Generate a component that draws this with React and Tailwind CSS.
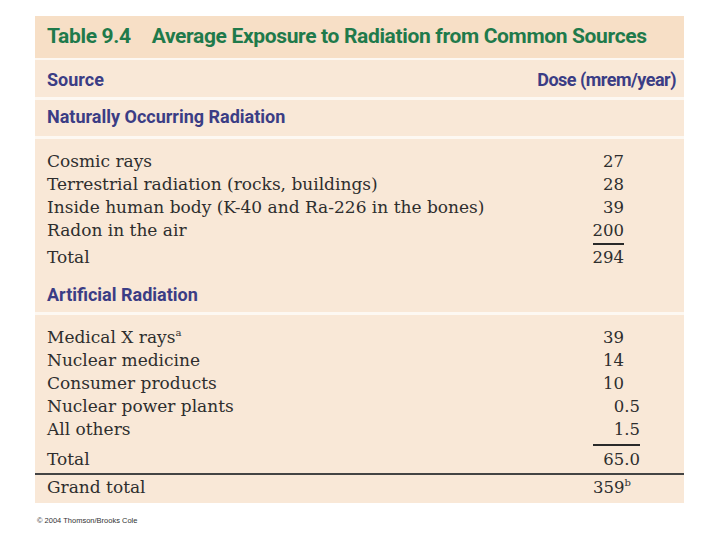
import React from "react";

const narrow = "font-['Roboto',sans-serif]";
const serif = "font-['DejaVu_Serif','Liberation_Serif',serif]";

function Row({ label, value, dec, sup }) {
  return (
    <div className="flex h-[23px] items-start justify-between leading-[23px]">
      <span className="text-[17px]">
        {label}
        {sup && <sup className="text-[10px] -top-[7px]">{sup}</sup>}
      </span>
      <span className={"text-[16.5px] " + (dec ? "pr-[44px]" : "pr-[60px]")}>{value}</span>
    </div>
  );
}

function Rule({ w, cls }) {
  return (
    <div className={"flex justify-end pr-[44px] " + cls}>
      <div className={"h-[2px] bg-[#2a2a2a] " + w} />
    </div>
  );
}

export default function App() {
  return (
    <div className="w-[720px] h-[540px] bg-white pt-[16px] pl-[35px] relative">
      <div className="w-[649px] flex flex-col gap-[2px] bg-[#fdf8f2]">
        {/* title */}
        <div className={"h-[42px] bg-[#f7dfc6] pl-[12px] pt-[8px] text-[21px] leading-[24px] font-bold whitespace-nowrap tracking-[-0.35px] text-[#1f7a4b] " + narrow}>
          <span>Table 9.4</span>
          <span className="ml-[21px]">Average Exposure to Radiation from Common Sources</span>
        </div>
        {/* header */}
        <div className={"h-[37px] bg-[#f9e8d7] flex justify-between pl-[12px] pr-[8px] pt-[10px] text-[18px] leading-[20px] font-bold text-[#3b3d85] mb-[1px] " + narrow}>
          <span>Source</span>
          <span className="tracking-[-0.5px]">Dose (mrem/year)</span>
        </div>
        <div className={"h-[36px] bg-[#f9e8d7] pl-[12px] pt-[7px] text-[18px] leading-[20px] font-bold text-[#3b3d85] mb-[1px] " + narrow}>
          Naturally Occurring Radiation
        </div>
        {/* body 1 */}
        <div className={"h-[173px] bg-[#f9e8d7] pl-[12px] pt-[11px] text-[#2e2e2e] mb-[1px] " + serif}>
          <Row label="Cosmic rays" value="27" />
          <Row label="Terrestrial radiation (rocks, buildings)" value="28" />
          <Row label="Inside human body (K-40 and Ra-226 in the bones)" value="39" />
          <Row label="Radon in the air" value="200" />
          <Rule w="w-[31px] mr-[16px]" cls="mt-[1px] mb-[1px]" />
          <Row label="Total" value="294" />
          <div className={"mt-[16px] text-[18px] leading-[20px] font-bold text-[#3b3d85] " + narrow}>
            Artificial Radiation
          </div>
        </div>
        {/* body 2 */}
        <div className={"h-[188px] bg-[#f9e8d7] pt-[11px] text-[#2e2e2e] " + serif}>
          <div className="pl-[12px]">
            <Row label="Medical X rays" sup="a" value="39" />
            <Row label="Nuclear medicine" value="14" />
            <Row label="Consumer products" value="10" />
            <Row label="Nuclear power plants" value="0.5" dec />
            <Row label="All others" value="1.5" dec />
            <Rule w="w-[47px]" cls="mt-[3px] mb-[2px]" />
            <Row label="Total" value="65.0" dec />
          </div>
          <div className="mt-[2px] h-[2px] bg-[#444]" />
          <div className="pl-[12px] mt-[1px]">
            <div className="flex h-[23px] items-start justify-between leading-[23px]">
              <span className="text-[17px]">Grand total</span>
              <span className="text-[16.5px] pr-[53px]">
                359<sup className="text-[10px] -top-[7px]">b</sup>
              </span>
            </div>
          </div>
        </div>
      </div>
      <div className="pl-[2px] mt-[13px] text-[7.5px] leading-[10px] text-[#333] font-['Liberation_Sans',Arial,sans-serif]">
        © 2004 Thomson/Brooks Cole
      </div>
    </div>
  );
}
